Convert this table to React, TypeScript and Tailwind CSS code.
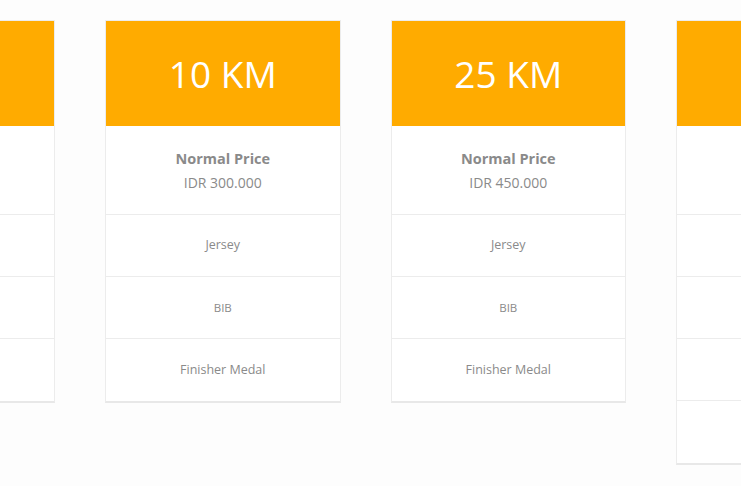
import React from "react";

type Card = { title: string; price: string; items: string[] };

const cards: Card[] = [
  { title: "5 KM", price: "IDR 200.000", items: ["Jersey", "BIB", "Finisher Medal"] },
  { title: "10 KM", price: "IDR 300.000", items: ["Jersey", "BIB", "Finisher Medal"] },
  { title: "25 KM", price: "IDR 450.000", items: ["Jersey", "BIB", "Finisher Medal"] },
  { title: "50 KM", price: "IDR 600.000", items: ["Jersey", "BIB", "Finisher Medal", "Finisher Tee"] },
];

function PriceCard({ c }: { c: Card }) {
  return (
    <div className="w-[235.5px] shrink-0 border border-[#ececec] border-b-2 border-b-[#e8e8e8] bg-white">
      <div className="h-[105px] bg-[#ffab00] flex items-center justify-center">
        <span className="text-white text-[37px] font-normal">{c.title}</span>
      </div>
      <div className="h-[89px] border-b border-[#ececec] flex flex-col items-center justify-center pt-[2px]">
        <div className="text-[14.5px] font-bold text-[#8a8a8a] leading-[22px]">Normal Price</div>
        <div className="text-[14px] text-[#8a8a8a] leading-[22px] mt-[2px]">{c.price}</div>
      </div>
      {c.items.map((it, i) => (
        <div
          key={i}
          className={`h-[62px] flex items-center justify-center text-[12.5px] text-[#8a8a8a] ${
            i < c.items.length - 1 ? "border-b border-[#ececec]" : ""
          }`}
        >
          {it === "BIB" ? <span className="text-[11.5px]">{it}</span> : it}
        </div>
      ))}
    </div>
  );
}

export default function App() {
  return (
    <div
      className="w-[741px] h-[486px] overflow-hidden bg-[#fdfdfd]"
      style={{ fontFamily: "'Open Sans', 'Noto Sans', sans-serif" }}
    >
      <div className="flex items-start gap-[50px] pt-[20px] ml-[-180.5px]">
        {cards.map((c, i) => (
          <PriceCard key={i} c={c} />
        ))}
      </div>
    </div>
  );
}
